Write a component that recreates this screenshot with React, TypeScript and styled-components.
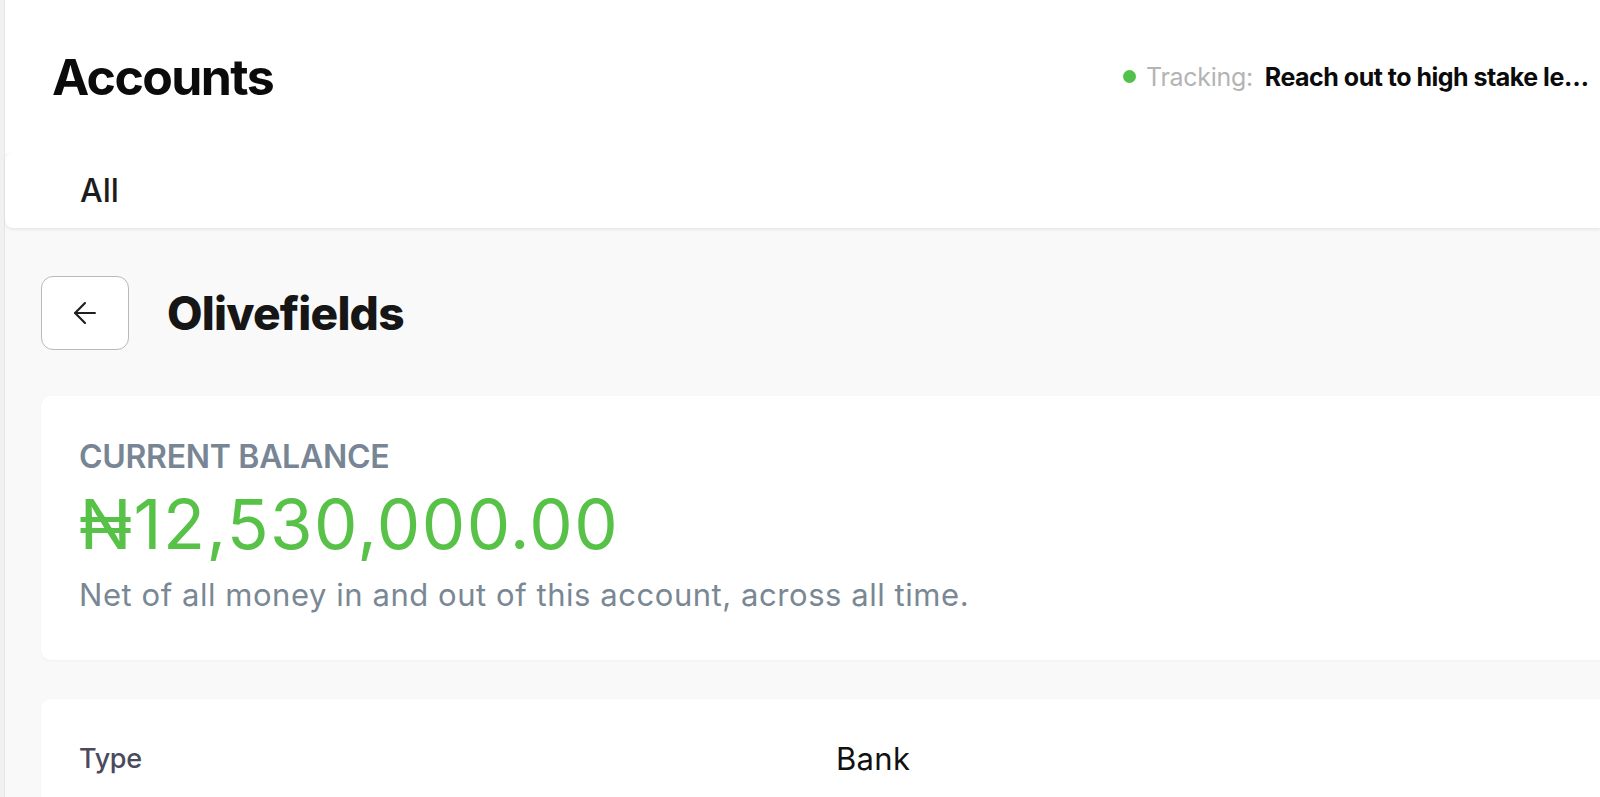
import React from 'react'
import styled, { createGlobalStyle } from 'styled-components'
import { ArrowLeft } from 'lucide-react'

const GlobalStyle = createGlobalStyle`
  html, body {
    margin: 0;
    padding: 0;
    background: #f9f9f9;
    overflow: hidden;
  }
  * {
    box-sizing: border-box;
  }
  body {
    font-family: Inter, "Noto Sans", "Liberation Sans", sans-serif;
    color: #111;
  }
`

const Page = styled.div`
  display: flex;
  min-height: 100vh;
  width: 1600px;
`

const Rail = styled.aside`
  flex: 0 0 5px;
  background: #f1f1f1;
  border-right: 1px solid #e6e6e6;
`

const Main = styled.main`
  flex: 1;
  display: flex;
  flex-direction: column;
  min-width: 0;
  background: #f9f9f9;
`

const Header = styled.header`
  height: 153px;
  display: flex;
  align-items: center;
  padding-left: 47px;
  background: #fff;
`

const Title = styled.h1`
  flex: 1;
  margin: 0;
  font-size: 50px;
  font-weight: 700;
  letter-spacing: -1.6px;
  color: #0b0b0b;
`

const Tracking = styled.div`
  flex: 0 0 477px;
  display: flex;
  align-items: center;
  gap: 10px;
  white-space: nowrap;
  overflow: hidden;
  font-size: 25px;
`

const Dot = styled.span`
  flex: none;
  width: 13px;
  height: 13px;
  border-radius: 50%;
  background: #52c14a;
`

const TrackingLabel = styled.span`
  color: #b4b4b4;
  font-weight: 400;
  letter-spacing: -0.3px;
`

const TrackingGoal = styled.span`
  margin-left: 2px;
  color: #0b0b0b;
  font-weight: 700;
  letter-spacing: -0.5px;
  overflow: hidden;
  text-overflow: ellipsis;
`

const TabBar = styled.nav`
  height: 75px;
  display: flex;
  align-items: center;
  padding-left: 75px;
  background: #fff;
  border-radius: 8px 0 0 8px;
  box-shadow: 0 2px 3px rgba(0, 0, 0, 0.07);
  position: relative;
  z-index: 1;
`

const Tab = styled.span`
  font-size: 32px;
  font-weight: 500;
  color: #1c1c1c;
`

const Content = styled.section`
  display: flex;
  flex-direction: column;
  padding: 48px 0 0 36px;
  margin-right: -40px;
`

const TitleRow = styled.div`
  display: flex;
  align-items: center;
  gap: 38px;
`

const BackButton = styled.button`
  width: 88px;
  height: 74px;
  display: flex;
  align-items: center;
  justify-content: center;
  background: #fff;
  border: 1.5px solid #b9b9b9;
  border-radius: 12px;
  color: #1e1e1e;
  padding: 0;
  cursor: pointer;
`

const AccountName = styled.h2`
  margin: 0;
  font-size: 46px;
  font-weight: 800;
  letter-spacing: -0.8px;
  color: #161616;
`

const Card = styled.div<{ $top: number }>`
  margin-top: ${p => p.$top}px;
  background: #fff;
  border-radius: 10px;
  box-shadow: 0 1px 3px rgba(0, 0, 0, 0.04);
`

const BalanceCard = styled(Card)`
  padding: 42px 38px 44px;
`

const Label = styled.div`
  font-size: 32px;
  line-height: 1.2;
  font-weight: 600;
  letter-spacing: -0.3px;
  color: #788594;
`

const Amount = styled.div`
  margin-top: 11px;
  font-size: 69px;
  line-height: 1.1;
  font-weight: 400;
  letter-spacing: 1.4px;
  color: #57c148;
`

const Note = styled.p`
  margin: 12px 0 0;
  font-size: 31px;
  line-height: 1.3;
  color: #7a8794;
  letter-spacing: 0.55px;
`

const DetailCard = styled(Card)`
  padding: 30px 38px 30px;
`

const DetailRow = styled.div`
  display: grid;
  grid-template-columns: 757px 1fr;
  align-items: center;
  min-height: 60px;
`

const DetailKey = styled.span`
  font-size: 27px;
  font-weight: 500;
  color: #4b4a5c;
  letter-spacing: -0.3px;
`

const DetailValue = styled.span`
  font-size: 31px;
  font-weight: 400;
  color: #111;
  letter-spacing: 0.3px;
`

const App: React.FC = () => {
  return (
    <>
      <GlobalStyle />
      <Page>
        <Rail />
        <Main>
          <Header>
            <Title>Accounts</Title>
            <Tracking>
              <Dot />
              <TrackingLabel>Tracking:</TrackingLabel>
              <TrackingGoal>Reach out to high stake leads this week</TrackingGoal>
            </Tracking>
          </Header>
          <TabBar>
            <Tab>All</Tab>
          </TabBar>
          <Content>
            <TitleRow>
              <BackButton aria-label="Back">
                <ArrowLeft size={34} strokeWidth={1.5} />
              </BackButton>
              <AccountName>Olivefields</AccountName>
            </TitleRow>
            <BalanceCard $top={46}>
              <Label>CURRENT BALANCE</Label>
              <Amount>₦12,530,000.00</Amount>
              <Note>Net of all money in and out of this account, across all time.</Note>
            </BalanceCard>
            <DetailCard $top={39}>
              <DetailRow>
                <DetailKey>Type</DetailKey>
                <DetailValue>Bank</DetailValue>
              </DetailRow>
            </DetailCard>
          </Content>
        </Main>
      </Page>
    </>
  )
}

export default App
